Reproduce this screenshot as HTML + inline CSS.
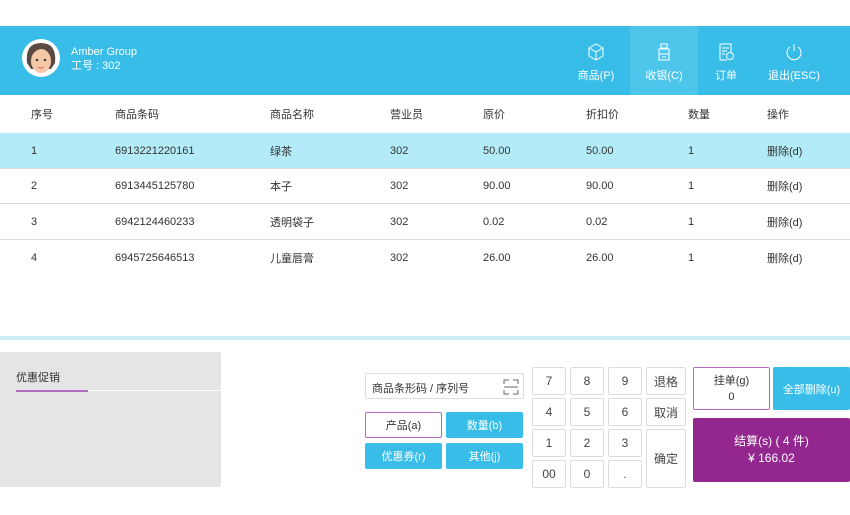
<!DOCTYPE html><html><head><meta charset="utf-8"><style>
*{margin:0;padding:0;box-sizing:border-box}
body{width:850px;height:515px;background:#fff;font-family:"Liberation Sans","Noto Sans CJK SC",sans-serif;font-size:11px;color:#333;position:relative;overflow:hidden}
.a{position:absolute}
.hdr{left:0;top:26px;width:850px;height:69px;background:#38bde8;color:#fff}
.tab{position:absolute;top:0;height:69px;text-align:center;font-size:11px}
.tab svg{display:block;margin:17px auto 6px}
.row{position:absolute;left:0;width:850px;height:35px;border-bottom:1px solid #ddd}
.row span,.th span{position:absolute;top:50%;transform:translateY(-50%)}
.btn{position:absolute;display:flex;align-items:center;justify-content:center;text-align:center;border-radius:2px;font-size:11px}
.k{border:1px solid #ddd;background:#fff;color:#444;font-size:12px}
.b{background:#38bde8;color:#fff}
</style></head><body>
<div class="a hdr">
 <svg class="a" style="left:22px;top:13px" width="38" height="38" viewBox="0 0 38 38"><circle cx="19" cy="19" r="19" fill="#fff"/><path d="M5 24 Q3 4 19 4 Q35 4 33 24 L29 30 L9 30Z" fill="#5a4a42"/><ellipse cx="19" cy="22" rx="10" ry="12" fill="#f5c8a8"/><path d="M9 18 Q14 9 22 10 Q28 12 29 18 Q27 10 19 9 Q11 10 9 18Z" fill="#5a4a42"/><circle cx="15" cy="21" r="1.2" fill="#333"/><circle cx="23" cy="21" r="1.2" fill="#333"/><path d="M16 28 Q19 30 22 28" stroke="#d66" fill="none"/></svg>
 <div class="a" style="left:71px;top:19px;font-size:11px;line-height:14px">Amber Group<br>工号 : 302</div>
 <div class="tab" style="left:562px;width:68px"><svg width="18" height="18" viewBox="0 0 18 18" fill="none" stroke="#fff"><path d="M9 1 L16 5 L16 13 L9 17 L2 13 L2 5Z M2 5 L9 9 L16 5 M9 9 L9 17"/></svg>商品(P)</div>
 <div class="tab" style="left:630px;width:68px;background:#4ec6ec"><svg width="18" height="18" viewBox="0 0 18 18" fill="none" stroke="#fff"><rect x="6" y="1" width="6" height="4"/><rect x="4" y="6" width="10" height="11"/><path d="M4 11h10M7 14h4"/></svg>收银(C)</div>
 <div class="tab" style="left:698px;width:56px"><svg width="18" height="18" viewBox="0 0 18 18" fill="none" stroke="#fff"><path d="M10 17H3V1h11v8M5 5h7M5 8h5M5 11h3"/><circle cx="13" cy="13" r="3.5"/></svg>订单</div>
 <div class="tab" style="left:758px;width:72px"><svg width="18" height="18" viewBox="0 0 18 18" fill="none" stroke="#fff"><path d="M5 4 A7 7 0 1 0 13 4 M9 1v7"/></svg>退出(ESC)</div>
</div>
<div class="row th" style="top:95px;height:37px;border:0"><span style="left:31px">序号</span><span style="left:115px">商品条码</span><span style="left:270px">商品名称</span><span style="left:390px">营业员</span><span style="left:483px">原价</span><span style="left:586px">折扣价</span><span style="left:688px">数量</span><span style="left:767px">操作</span></div>
<div class="row" style="top:133px;background:#b3ecf8;height:36px"><span style="left:31px">1</span><span style="left:115px">6913221220161</span><span style="left:270px">绿茶</span><span style="left:390px">302</span><span style="left:483px">50.00</span><span style="left:586px">50.00</span><span style="left:688px">1</span><span style="left:767px">删除(d)</span></div>
<div class="row" style="top:169px"><span style="left:31px">2</span><span style="left:115px">6913445125780</span><span style="left:270px">本子</span><span style="left:390px">302</span><span style="left:483px">90.00</span><span style="left:586px">90.00</span><span style="left:688px">1</span><span style="left:767px">删除(d)</span></div>
<div class="row" style="top:204px;height:36px"><span style="left:31px">3</span><span style="left:115px">6942124460233</span><span style="left:270px">透明袋子</span><span style="left:390px">302</span><span style="left:483px">0.02</span><span style="left:586px">0.02</span><span style="left:688px">1</span><span style="left:767px">删除(d)</span></div>
<div class="row" style="top:240px;border:0"><span style="left:31px">4</span><span style="left:115px">6945725646513</span><span style="left:270px">儿童唇膏</span><span style="left:390px">302</span><span style="left:483px">26.00</span><span style="left:586px">26.00</span><span style="left:688px">1</span><span style="left:767px">删除(d)</span></div>
<div class="a" style="left:0;top:336px;width:850px;height:4px;background:#cdeef3"></div>
<div class="a" style="left:0;top:352px;width:221px;height:135px;background:#e5e5e5;border-radius:2px">
 <div class="a" style="left:16px;top:17px">优惠促销</div>
 <div class="a" style="left:16px;top:38px;width:205px;height:1px;background:#fff"></div>
 <div class="a" style="left:16px;top:38px;width:72px;height:2px;background:#b16cc0"></div>
</div>
<div class="a" style="left:365px;top:373px;width:159px;height:26px;border:1px solid #ddd;border-radius:2px;padding:6px 0 0 6px">商品条形码 / 序列号
 <svg class="a" style="right:4px;top:5px" width="16" height="16" viewBox="0 0 16 16" fill="none" stroke="#666"><path d="M1 5V1h5M10 1h5v4M15 11v4h-5M6 15H1v-4M1 8h14"/></svg></div>
<div class="btn" style="left:365px;top:412px;width:77px;height:26px;border:1px solid #b16cc0;color:#333">产品(a)</div>
<div class="btn b" style="left:446px;top:412px;width:77px;height:26px">数量(b)</div>
<div class="btn b" style="left:365px;top:443px;width:77px;height:26px">优惠券(r)</div>
<div class="btn b" style="left:446px;top:443px;width:77px;height:26px">其他(j)</div>
<div class="btn k" style="left:532px;top:367px;width:34px;height:28px">7</div>
<div class="btn k" style="left:570px;top:367px;width:34px;height:28px">8</div>
<div class="btn k" style="left:608px;top:367px;width:34px;height:28px">9</div>
<div class="btn k" style="left:646px;top:367px;width:40px;height:28px">退格</div>
<div class="btn k" style="left:532px;top:398px;width:34px;height:28px">4</div>
<div class="btn k" style="left:570px;top:398px;width:34px;height:28px">5</div>
<div class="btn k" style="left:608px;top:398px;width:34px;height:28px">6</div>
<div class="btn k" style="left:646px;top:398px;width:40px;height:28px">取消</div>
<div class="btn k" style="left:532px;top:429px;width:34px;height:28px">1</div>
<div class="btn k" style="left:570px;top:429px;width:34px;height:28px">2</div>
<div class="btn k" style="left:608px;top:429px;width:34px;height:28px">3</div>
<div class="btn k" style="left:646px;top:429px;width:40px;height:59px">确定</div>
<div class="btn k" style="left:532px;top:460px;width:34px;height:28px">00</div>
<div class="btn k" style="left:570px;top:460px;width:34px;height:28px">0</div>
<div class="btn k" style="left:608px;top:460px;width:34px;height:28px">.</div>
<div class="btn" style="left:693px;top:367px;width:77px;height:43px;border:1px solid #b16cc0;line-height:16px">挂单(g)<br>0</div>
<div class="btn b" style="left:773px;top:367px;width:77px;height:43px">全部删除(u)</div>
<div class="btn" style="left:693px;top:418px;width:157px;height:64px;background:#93268f;color:#fff;font-size:12px;line-height:17px">结算(s) ( 4 件)<br>¥ 166.02</div>
</body></html>
